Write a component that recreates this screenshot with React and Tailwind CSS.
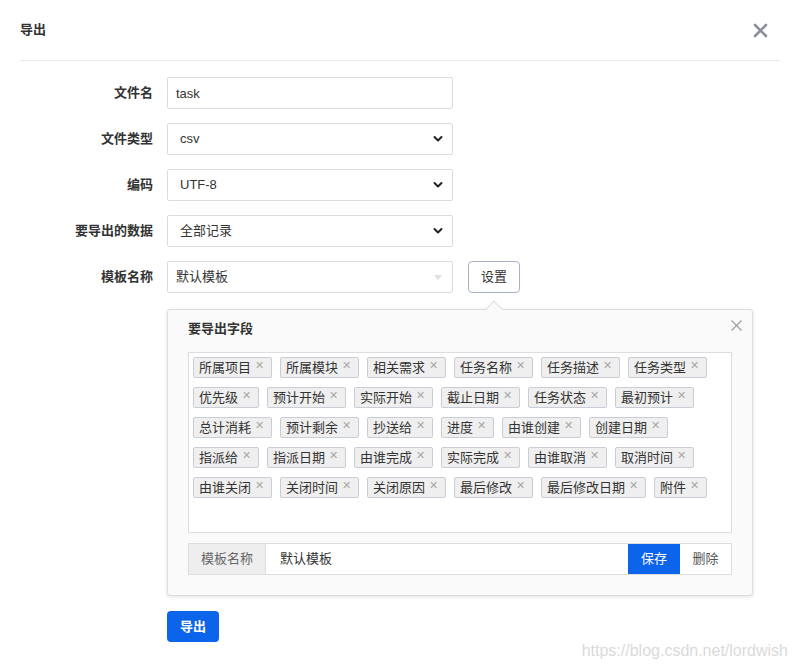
import React from 'react';

const fields = [
	'所属项目', '所属模块', '相关需求', '任务名称', '任务描述', '任务类型',
	'优先级', '预计开始', '实际开始', '截止日期', '任务状态', '最初预计',
	'总计消耗', '预计剩余', '抄送给', '进度', '由谁创建', '创建日期',
	'指派给', '指派日期', '由谁完成', '实际完成', '由谁取消', '取消时间',
	'由谁关闭', '关闭时间', '关闭原因', '最后修改', '最后修改日期', '附件',
];

const Chevron = () => (
	<svg width="10" height="7" viewBox="0 0 10 7" className="pointer-events-none absolute right-[4px] top-1/2 -translate-y-1/2 mr-[6px]">
		<path d="M1.5 1.5 L5 5 L8.5 1.5" fill="none" stroke="#222" strokeWidth="2" strokeLinecap="round" strokeLinejoin="round" />
	</svg>
);

const Row = ({ label, children, extra }) => (
	<div className="flex h-[32px] items-center">
		<div className="w-[153px] text-right text-[13px] font-bold text-[#333]">{label}</div>
		<div className="relative ml-[14px] h-full w-[286px]">{children}</div>
		{extra}
	</div>
);

const SelectBox = ({ value, options }) => (
	<>
		<select
			defaultValue={value}
			className="h-full w-full appearance-none rounded-[2px] border border-[#dcdcdc] bg-white pl-[12px] text-[13px] text-[#333] outline-none"
		>
			{options.map((o) => (
				<option key={o}>{o}</option>
			))}
		</select>
		<Chevron />
	</>
);

const Tag = ({ name }) => (
	<span className="flex h-[21px] items-center rounded-[2px] border border-[#c9cdd6] bg-[#efefef] pl-[5px] pr-[7px] text-[13px] leading-none text-[#333]">
		{name}
		<span className="ml-[4px] -mt-[5px] text-[11px] text-[#a8a8a8]">✕</span>
	</span>
);

export default function App() {
	return (
		<div className="relative h-[668px] w-[796px] overflow-hidden bg-white font-['Liberation_Sans','Noto_Sans_CJK_SC',sans-serif]">
			{/* header */}
			<div className="ml-[20px] mr-[16px] flex h-[61px] items-center justify-between border-b border-[#e8e8e8]">
				<h3 className="text-[13px] font-bold text-[#333]">导出</h3>
				<button className="mr-[12px] text-[#8b8f9c]">
					<svg width="15" height="15" viewBox="0 0 15 15">
						<path d="M2 2 L13 13 M13 2 L2 13" stroke="currentColor" strokeWidth="2.6" strokeLinecap="round" />
					</svg>
				</button>
			</div>

			{/* form */}
			<div className="flex flex-col gap-[14px] pt-[16px]">
				<Row label="文件名">
					<input
						defaultValue="task"
						className="h-full w-full rounded-[2px] border border-[#dcdcdc] bg-white pl-[8px] text-[13px] text-[#333] outline-none"
					/>
				</Row>
				<Row label="文件类型">
					<SelectBox value="csv" options={['csv', 'xml', 'html']} />
				</Row>
				<Row label="编码">
					<SelectBox value="UTF-8" options={['UTF-8', 'GBK']} />
				</Row>
				<Row label="要导出的数据">
					<SelectBox value="全部记录" options={['全部记录', '选中记录']} />
				</Row>
				<Row
					label="模板名称"
					extra={
						<button className="ml-[15px] h-full w-[52px] rounded-[4px] border border-[#aab2c6] bg-white text-[13px] text-[#333]">
							设置
						</button>
					}
				>
					<div className="flex h-full w-full items-center justify-between rounded-[2px] border border-[#dcdcdc] bg-white pl-[8px] pr-[8px] text-[13px] text-[#333]">
						<span>默认模板</span>
						<svg width="8" height="5" viewBox="0 0 8 5" className="mr-[2px]">
							<path d="M0 0 L8 0 L4 5 Z" fill="#e0e0e0" />
						</svg>
					</div>
				</Row>
			</div>

			{/* popover panel */}
			<div className="relative ml-[167px] mt-[16px] w-[586px] rounded-[3px] border border-[#dddddd] bg-[#fafafa] px-[20px] pb-[20px] pt-[9px] shadow-[0_1px_4px_rgba(0,0,0,0.12)]">
				<span className="absolute left-[320px] top-[-7px] h-[12px] w-[12px] rotate-45 border-l border-t border-[#dddddd] bg-[#fafafa]" />
				<button className="absolute right-[10px] top-[10px] text-[#9a9a9a]">
					<svg width="11" height="11" viewBox="0 0 11 11">
						<path d="M0.5 0.5 L10.5 10.5 M10.5 0.5 L0.5 10.5" stroke="currentColor" strokeWidth="1.1" />
					</svg>
				</button>
				<div className="text-[13px] font-bold leading-[20px] text-[#333]">要导出字段</div>
				<div className="mt-[13px] flex h-[181px] flex-wrap content-start gap-x-[8px] gap-y-[9px] border border-[#dddddd] bg-white p-[4px]">
					{fields.map((f) => (
						<Tag key={f} name={f} />
					))}
				</div>
				<div className="mt-[10px] flex h-[32px] border border-[#dddddd] text-[13px]">
					<span className="flex w-[77px] items-center justify-center border-r border-[#dddddd] bg-[#eeeeee] text-[#666]">
						模板名称
					</span>
					<input defaultValue="默认模板" className="min-w-0 flex-1 bg-white pl-[14px] text-[#333] outline-none" />
					<button className="w-[52px] bg-[#0c64eb] text-white">保存</button>
					<button className="w-[51px] bg-white text-[#555]">删除</button>
				</div>
			</div>

			<button className="ml-[167px] mt-[15px] h-[31px] w-[52px] rounded-[4px] bg-[#0c64eb] text-[13px] font-bold text-white">
				导出
			</button>

			<div className="absolute bottom-[5px] right-[8px] text-[16px] text-[#dadada]">https://blog.csdn.net/lordwish</div>
		</div>
	);
}
